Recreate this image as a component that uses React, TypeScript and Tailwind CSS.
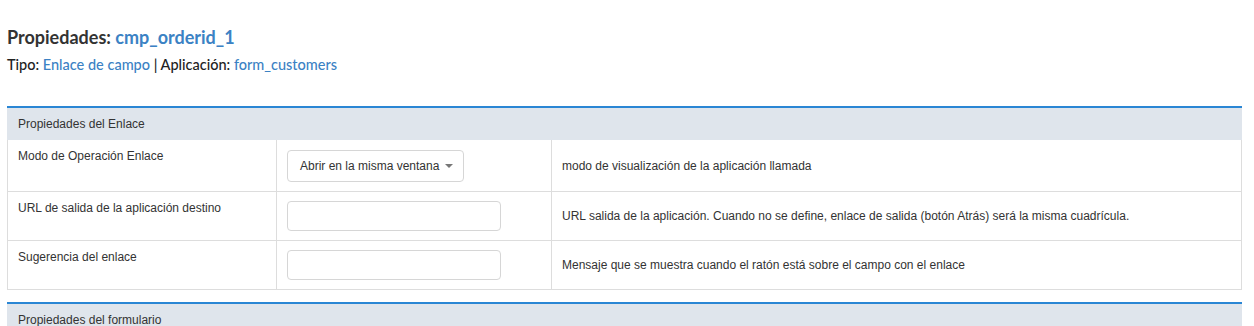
const ROWS = [
  {
    label: 'Modo de Operación Enlace',
    control: 'select',
    help: 'modo de visualización de la aplicación llamada',
  },
  {
    label: 'URL de salida de la aplicación destino',
    control: 'input',
    help: 'URL salida de la aplicación. Cuando no se define, enlace de salida (botón Atrás) será la misma cuadrícula.',
  },
  {
    label: 'Sugerencia del enlace',
    control: 'input',
    help: 'Mensaje que se muestra cuando el ratón está sobre el campo con el enlace',
  },
];

const PanelHeader = ({ title }: { title: string }) => (
  <div className="border-t-2 border-[#2a86d4] bg-[#dfe5ec] h-[34px] flex items-center px-[11px] text-[12px] text-[#333]">
    {title}
  </div>
);

const App = () => {
  return (
    <div className="w-[1254px] h-[326px] overflow-hidden bg-white px-[7px] pr-[12px] font-['Liberation_Sans',Arial,sans-serif] text-[#333]">
      {/* encabezado */}
      <div className="pt-[25px] font-['Lato','Open_Sans',sans-serif]">
        <h1 className="text-[18px] leading-[24px] font-bold text-[#333]">
          Propiedades: <span className="text-[#3b82c4]">cmp_orderid_1</span>
        </h1>
        <div className="mt-[6px] text-[14.5px] leading-[20px] font-medium text-[#222]">
          Tipo: <span className="text-[#3b82c4]">Enlace de campo</span> | Aplicación:{' '}
          <span className="text-[#3b82c4]">form_customers</span>
        </div>
      </div>

      {/* Propiedades del Enlace */}
      <div className="mt-[31px]">
        <PanelHeader title="Propiedades del Enlace" />
        <div className="border-x border-b border-[#ddd]">
          {ROWS.map((row, i) => (
            <div
              key={row.label}
              className={`grid grid-cols-[268px_275px_1fr] text-[12px] ${i > 0 ? 'border-t border-[#ddd]' : ''}`}
            >
              <div className="px-[10px] pt-[8px] leading-[17px]">{row.label}</div>
              <div className={`border-l border-[#ddd] px-[10px] pb-[9px] ${i === 0 ? 'pt-[10px]' : 'pt-[9px]'}`}>
                {row.control === 'select' ? (
                  <div className="w-[177px] h-[32px] border border-[#d6d6d6] rounded-[4px] flex items-center justify-between pl-[12px] pr-[10px] text-[#333]">
                    <span>Abrir en la misma ventana</span>
                    <span className="w-0 h-0 border-x-[4px] border-x-transparent border-t-[4px] border-t-[#777]" />
                  </div>
                ) : (
                  <div className="w-[214px] h-[30px] border border-[#d6d6d6] rounded-[4px]" />
                )}
              </div>
              <div className="border-l border-[#ddd] px-[10px] flex items-center">{row.help}</div>
            </div>
          ))}
        </div>
      </div>

      {/* Propiedades del formulario */}
      <div className="mt-[12px]">
        <PanelHeader title="Propiedades del formulario" />
      </div>
    </div>
  );
};

export default App;
